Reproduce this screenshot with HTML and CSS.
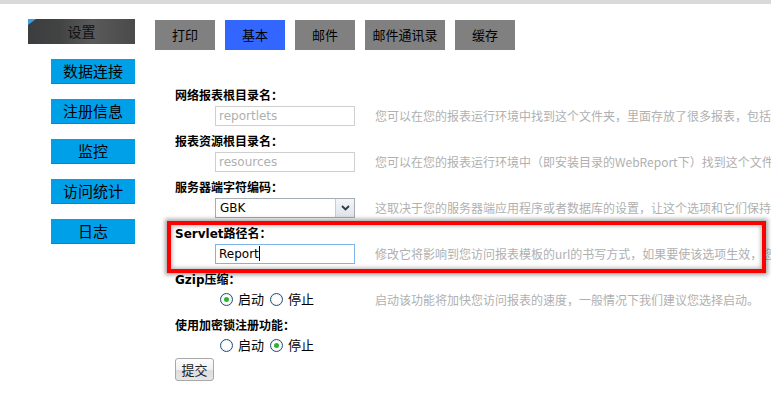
FILE: index.html
```html
<!DOCTYPE html>
<html lang="zh-CN">
<head>
    <meta charset="UTF-8">
    <title>设置 - 基本</title>
    <link rel="stylesheet" href="styles.css">
</head>
<body>
    <div class="top-strip"></div>
    <div class="page">
        <div class="sidebar">
            <div class="side-title">设置</div>
            <a class="side-item">数据连接</a>
            <a class="side-item">注册信息</a>
            <a class="side-item">监控</a>
            <a class="side-item">访问统计</a>
            <a class="side-item">日志</a>
        </div>

        <div class="content">
            <div class="tabs">
                <span class="tab">打印</span>
                <span class="tab active">基本</span>
                <span class="tab">邮件</span>
                <span class="tab wide">邮件通讯录</span>
                <span class="tab">缓存</span>
            </div>

            <form class="settings">
                <div class="field">
                    <div class="label">网络报表根目录名：</div>
                    <div class="row">
                        <input class="text" type="text" value="reportlets" disabled>
                        <span class="desc">您可以在您的报表运行环境中找到这个文件夹，里面存放了很多报表，包括</span>
                    </div>
                </div>
                <div class="field">
                    <div class="label">报表资源根目录名：</div>
                    <div class="row">
                        <input class="text" type="text" value="resources" disabled>
                        <span class="desc">您可以在您的报表运行环境中（即安装目录的WebReport下）找到这个文件</span>
                    </div>
                </div>
                <div class="field">
                    <div class="label">服务器端字符编码：</div>
                    <div class="row">
                        <div class="select">
                            <span class="select-value">GBK</span>
                            <span class="select-btn">
                                <svg width="9" height="6" viewBox="0 0 9 6"><path d="M1 1 L4.5 4.5 L8 1" fill="none" stroke="#2b3a4f" stroke-width="1.8"/></svg>
                            </span>
                        </div>
                        <span class="desc">这取决于您的服务器端应用程序或者数据库的设置，让这个选项和它们保持</span>
                    </div>
                </div>
                <div class="field">
                    <div class="label">Servlet路径名：</div>
                    <div class="row">
                        <div class="text focused">Report<span class="caret"></span></div>
                        <span class="desc">修改它将影响到您访问报表模板的url的书写方式，如果要使该选项生效，您</span>
                    </div>
                </div>
                <div class="field">
                    <div class="label">Gzip压缩：</div>
                    <div class="row">
                        <div class="radios">
                            <label><span class="radio checked"></span>启动</label>
                            <label><span class="radio"></span>停止</label>
                        </div>
                        <span class="desc">启动该功能将加快您访问报表的速度，一般情况下我们建议您选择启动。</span>
                    </div>
                </div>
                <div class="field last">
                    <div class="label">使用加密锁注册功能：</div>
                    <div class="row">
                        <div class="radios">
                            <label><span class="radio"></span>启动</label>
                            <label><span class="radio checked"></span>停止</label>
                        </div>
                    </div>
                </div>
                <button class="submit" type="button">提交</button>
            </form>

            <!-- highlight frame drawn over the servlet row -->
            <div class="highlight"></div>
        </div>
    </div>
</body>
</html>
```

FILE: styles.css
```css
body {
    margin: 0;
    font-family: "Noto Sans CJK SC", sans-serif;
    color: #000;
    background: #fff;
    overflow: hidden;
    width: 771px;
    height: 395px;
}
.top-strip {
    height: 4px;
    background: #d9d9d9;
}
.page {
    display: flex;
}
.sidebar {
    flex: none;
    width: 127px;
    padding: 15px 0 0 28px;
    display: flex;
    flex-direction: column;
    align-items: flex-start;
    gap: 15px;
}
.side-title {
    width: 107px;
    height: 25px;
    line-height: 25px;
    text-align: center;
    font-size: 14px;
    color: #111;
    background: linear-gradient(90deg, #3b3d3e 0%, #424444 30%, #5a5a5a 60%, #4a4a4a 100%);
    position: relative;
}
.side-title::before {
    content: "";
    position: absolute;
    left: 0;
    top: 0;
    border-top: 6px solid #3aa0e0;
    border-right: 8px solid transparent;
}
.side-item {
    margin-left: 23px;
    width: 84px;
    height: 24px;
    line-height: 24px;
    text-align: center;
    font-size: 15px;
    background: #00a0e9;
    border-bottom: 1px solid #0b86c8;
    color: #000;
}
.content {
    flex: 1;
    min-width: 0;
    padding-top: 16px;
    position: relative;
}
.tabs {
    display: flex;
    gap: 10px;
}
.tab {
    width: 60px;
    height: 30px;
    line-height: 30px;
    text-align: center;
    font-size: 13px;
    background: #808080;
}
.tab.wide {
    width: 80px;
}
.tab.active {
    background: #3366ff;
}
.settings {
    margin-top: 36px;
    padding-left: 20px;
}
.label {
    height: 20px;
    line-height: 20px;
    font-family: "DejaVu Sans", "Noto Sans CJK SC", sans-serif;
    font-size: 12px;
    font-weight: bold;
}
.row {
    height: 26px;
    display: flex;
    align-items: flex-start;
    white-space: nowrap;
}
.field.last .row {
    height: 22px;
}
.text {
    box-sizing: border-box;
    margin-left: 40px;
    width: 140px;
    height: 20px;
    padding: 0 3px;
    border: 1px solid #cfcfcf;
    font-family: "DejaVu Sans", sans-serif;
    font-size: 12px;
    line-height: 18px;
    color: #000;
    background: #fff;
    flex: none;
}
.text:disabled {
    color: #b0b0b0;
}
.text.focused {
    border-color: #7eb4ea;
}
.caret {
    display: inline-block;
    width: 1px;
    height: 15px;
    background: #000;
    vertical-align: -3px;
}
.select {
    box-sizing: border-box;
    margin-left: 40px;
    width: 140px;
    height: 20px;
    border: 1px solid #a5acb5;
    display: flex;
    flex: none;
    font-family: "DejaVu Sans", sans-serif;
    font-size: 12px;
}
.select-value {
    flex: 1;
    padding-left: 4px;
    line-height: 18px;
}
.select-btn {
    width: 18px;
    border-left: 1px solid #c8ced6;
    background: linear-gradient(#f4f6f8, #dfe3e8);
    display: flex;
    align-items: center;
    justify-content: center;
}
.desc {
    margin-left: 20px;
    min-width: 0;
    overflow: hidden;
    font-size: 12px;
    line-height: 20px;
    color: #b0b0b0;
}
.radios {
    margin-left: 45px;
    width: 135px;
    display: flex;
    gap: 6px;
    font-size: 13px;
    line-height: 18px;
    flex: none;
}
.radios label {
    display: flex;
    align-items: center;
    gap: 5px;
}
.radio {
    box-sizing: border-box;
    width: 13px;
    height: 13px;
    border-radius: 50%;
    border: 1px solid #1f4f7a;
    background: radial-gradient(circle, #fff 40%, #dde4ea 100%);
    position: relative;
}
.radio.checked::after {
    content: "";
    position: absolute;
    left: 3px;
    top: 3px;
    width: 5px;
    height: 5px;
    border-radius: 50%;
    background: #2fb22f;
}
.submit {
    display: block;
    width: 39px;
    height: 23px;
    padding: 0;
    font-family: "Noto Sans CJK SC", sans-serif;
    font-size: 13px;
    color: #222;
    border: 1px solid #a8a8a8;
    border-radius: 3px;
    background: linear-gradient(#fdfdfd 0%, #f0f0f0 50%, #dcdcdc 51%, #e6e6e6 100%);
}
.highlight {
    position: absolute;
    left: 12px;
    top: 217px;
    width: 591px;
    height: 44px;
    border: 4px solid #ff0000;
    box-shadow: 0 0 4px 2px rgba(0, 0, 0, 0.35), inset 0 0 4px 1px rgba(0, 0, 0, 0.3);
    pointer-events: none;
}
```
